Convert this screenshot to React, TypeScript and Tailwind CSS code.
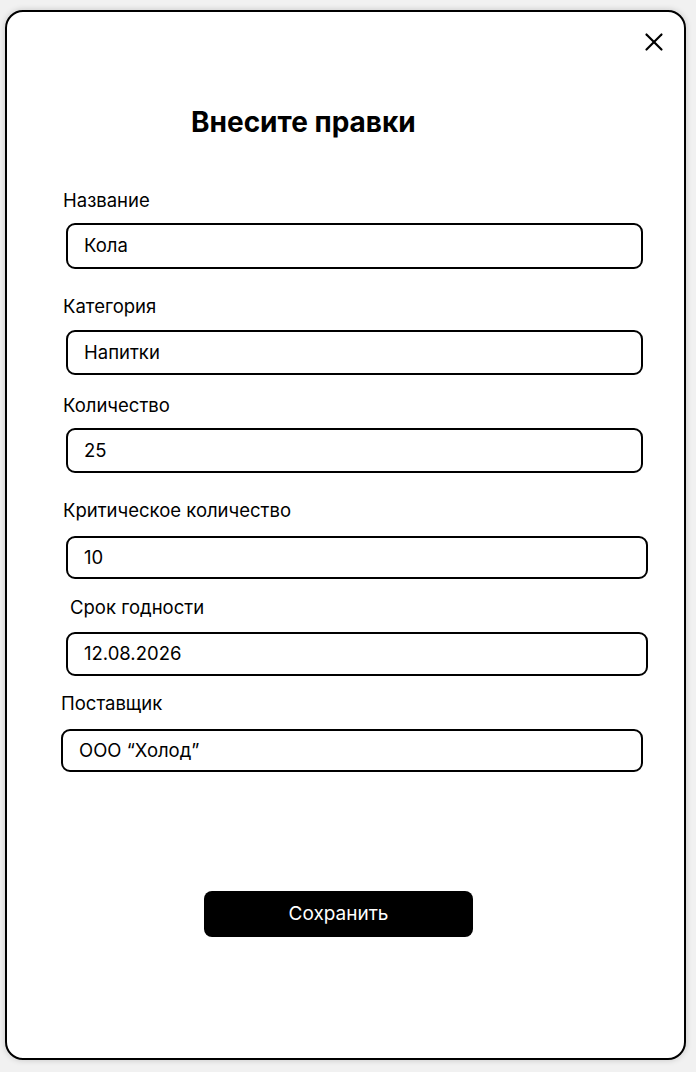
import React from "react";

type Field = {
  label: string;
  value: string;
  labelMt: string;
  labelMl: string;
  gap: string;
  inputMl: string;
  inputW: string;
  inputH: string;
};

const fields: Field[] = [
  { label: "Название", value: "Кола", labelMt: "mt-[50px]", labelMl: "ml-[56px]", gap: "mt-[12px]", inputMl: "ml-[59px]", inputW: "w-[577px]", inputH: "h-[46px]" },
  { label: "Категория", value: "Напитки", labelMt: "mt-[26px]", labelMl: "ml-[56px]", gap: "mt-[13px]", inputMl: "ml-[59px]", inputW: "w-[577px]", inputH: "h-[45px]" },
  { label: "Количество", value: "25", labelMt: "mt-[19px]", labelMl: "ml-[56px]", gap: "mt-[12px]", inputMl: "ml-[59px]", inputW: "w-[577px]", inputH: "h-[45px]" },
  { label: "Критическое количество", value: "10", labelMt: "mt-[26px]", labelMl: "ml-[56px]", gap: "mt-[15px]", inputMl: "ml-[59px]", inputW: "w-[582px]", inputH: "h-[43px]" },
  { label: "Срок годности", value: "12.08.2026", labelMt: "mt-[17px]", labelMl: "ml-[63px]", gap: "mt-[14px]", inputMl: "ml-[59px]", inputW: "w-[582px]", inputH: "h-[44px]" },
  { label: "Поставщик", value: "ООО “Холод”", labelMt: "mt-[16px]", labelMl: "ml-[54px]", gap: "mt-[15px]", inputMl: "ml-[54px]", inputW: "w-[582px]", inputH: "h-[43px]" },
];

export default function App() {
  return (
    <div
      className="min-h-screen bg-[#f1f1f1] pt-[10px] pl-[5px]"
      style={{ fontFamily: "Inter, 'Noto Sans', sans-serif" }}
    >
      <div className="w-[681px] h-[1050px] bg-white border-2 border-black rounded-[18px] shadow-[0_0_6px_rgba(0,0,0,0.18)] text-black">
        <div className="flex justify-end pt-[18px] pr-[18px]">
          <button className="w-[24px] h-[24px] flex items-center justify-center" aria-label="Закрыть">
            <svg width="24" height="24" viewBox="0 0 24 24" fill="none" stroke="black" strokeWidth="2.2" strokeLinecap="round">
              <line x1="4.5" y1="4.5" x2="19.5" y2="19.5" />
              <line x1="19.5" y1="4.5" x2="4.5" y2="19.5" />
            </svg>
          </button>
        </div>
        <h1 className="mt-[51px] ml-[184px] text-[28px] leading-[34px] font-bold">
          Внесите правки
        </h1>
        {fields.map((f) => (
          <div key={f.label}>
            <div className={`${f.labelMt} ${f.labelMl} text-[18.5px] leading-[22px]`}>{f.label}</div>
            <div
              className={`${f.gap} ${f.inputMl} ${f.inputW} ${f.inputH} border-2 border-black rounded-[9px] flex items-center pl-[16px] text-[18.5px]`}
            >
              {f.value}
            </div>
          </div>
        ))}
        <div className="mt-[119px] ml-[197px]">
          <button className="w-[269px] h-[46px] bg-black text-white rounded-[8px] text-[19px] flex items-center justify-center">
            Сохранить
          </button>
        </div>
      </div>
    </div>
  );
}
